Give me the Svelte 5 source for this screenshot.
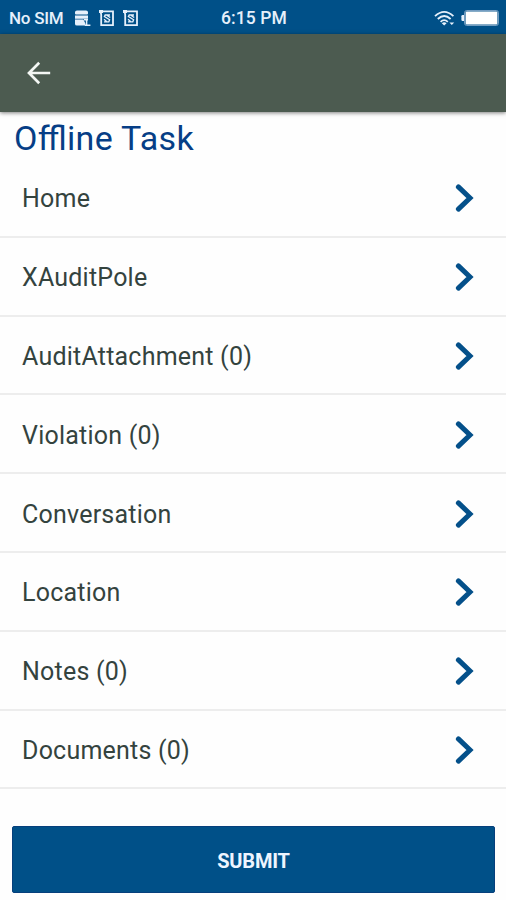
<script lang="ts">
	type Task = {
		label: string;
		count?: number;
	};

	const tasks: Task[] = [
		{ label: 'Home' },
		{ label: 'XAuditPole' },
		{ label: 'AuditAttachment', count: 0 },
		{ label: 'Violation', count: 0 },
		{ label: 'Conversation' },
		{ label: 'Location' },
		{ label: 'Notes', count: 0 },
		{ label: 'Documents', count: 0 }
	];
</script>

{#snippet simIcon()}
	<svg class="sim" viewBox="0 0 16 18" width="16" height="18" aria-hidden="true">
		<path d="M1.6 2.4H14V16.2H2.2V5.6Z" fill="none" stroke="currentColor" stroke-width="1.8" />
		<path d="M0 1h4v3H0z" fill="currentColor" />
		<path
			d="M11 6H6.2L5.4 7.6L10.6 10.8L9.8 12.8H5M8.2 6.4L11.2 8.6M5 10.2L7.6 12.4"
			fill="none"
			stroke="currentColor"
			stroke-width="1.3"
		/>
	</svg>
{/snippet}

<div class="screen">
	<div class="status-bar">
		<div class="status-left">
			<span class="carrier">No SIM</span>
			<svg class="storage" viewBox="0 0 17 17" width="17" height="17" aria-hidden="true">
				<path
					d="M1 2.2Q1 .6 3 .6H12Q14 .6 14 2.2V3.6Q14 4.6 13 4.6H2Q1 4.6 1 3.6ZM1 5.4H14V8.8H1ZM1 9.6H9.4L11.4 13.4V15.6H3Q1 15.6 1 14Z"
					fill="currentColor"
				/>
				<path d="M10 9.8H14M12.6 10V14.4M10.8 15.2H16.4" stroke="currentColor" stroke-width="1.5" />
			</svg>
			{@render simIcon()}
			{@render simIcon()}
		</div>
		<span class="clock">6:15 PM</span>
		<div class="status-right">
			<svg viewBox="0 0 22 17" width="22" height="17" aria-hidden="true">
				<g fill="none" stroke="currentColor" stroke-width="1.8">
					<path d="M1 6.2Q10.2-2.4 19.4 6.2" />
					<path d="M3.8 9Q10.2 3 16.6 9" />
					<path d="M6.6 11.8Q10.2 8.4 13.8 11.8" />
				</g>
				<path d="M7.8 13.2Q10.2 11.2 12.6 13.2L10.2 15.6ZM15.4 12.4H20.2L17.8 15Z" fill="currentColor" />
			</svg>
			<svg class="battery" viewBox="0 0 38 16" width="38" height="16" aria-hidden="true">
				<rect x="3.6" y=".6" width="33.8" height="14.8" rx="2" fill="none" stroke="#7fa6c8" />
				<rect x="4.6" y="1.6" width="31.8" height="12.8" rx="1" fill="#fff" />
				<path d="M3 5H1.6Q.4 5 .4 6.2V9.8Q.4 11 1.6 11H3Z" fill="currentColor" />
			</svg>
		</div>
	</div>

	<header class="toolbar">
		<button class="back" aria-label="Back">
			<svg viewBox="0 0 24 24" width="24" height="24" aria-hidden="true">
				<path d="M12.2 1.8L2 12L12.2 22.2M2.4 12H23.2" />
			</svg>
		</button>
	</header>

	<main>
		<h1>Offline Task</h1>
		<ul class="tasks">
			{#each tasks as task}
				<li>
					<span>{task.label}{task.count === undefined ? '' : ` (${task.count})`}</span>
					<svg class="chevron" viewBox="0 0 20 30" width="20" height="30" aria-hidden="true">
						<path d="M3.4 3.9L15 15L3.4 26.1" />
					</svg>
				</li>
			{/each}
		</ul>
	</main>

	<footer>
		<button class="submit">SUBMIT</button>
	</footer>
</div>

<style>
	:global(body) {
		margin: 0;
		background: #fefefe;
	}

	.screen {
		display: flex;
		flex-direction: column;
		width: 506px;
		height: 900px;
		overflow: hidden;
		background: #fefefe;
		font-family: Roboto, sans-serif;
	}

	.status-bar {
		display: grid;
		grid-template-columns: 1fr auto 1fr;
		align-items: center;
		flex: none;
		height: 34px;
		padding: 0 7px 0 9px;
		box-sizing: border-box;
		background: #005088;
		color: #e6f0fb;
		font-size: 17.5px;
		font-weight: 500;
		line-height: 36px;
	}

	.status-left,
	.status-right {
		display: flex;
		align-items: center;
	}

	.carrier {
		width: 55px;
		font-size: 17px;
		letter-spacing: -0.25px;
		white-space: nowrap;
	}

	.clock {
		letter-spacing: 0.1px;
	}

	.storage {
		margin-left: 10px;
	}

	.sim {
		margin-left: 8px;
	}

	.status-right {
		justify-content: flex-end;
	}

	.battery {
		margin-left: 5px;
	}

	.toolbar {
		z-index: 1;
		display: flex;
		align-items: center;
		flex: none;
		height: 78px;
		padding-left: 27px;
		background: #4c5b50;
		box-shadow: 0 1px 4px rgb(0 0 0 / 50%);
	}

	.back {
		display: flex;
		padding: 0;
		border: 0;
		background: none;
	}

	.back path {
		fill: none;
		stroke: #f4f7f4;
		stroke-width: 2.7;
	}

	h1 {
		height: 47px;
		margin: 0;
		padding-left: 14px;
		color: #063e86;
		font-size: 34px;
		font-weight: 400;
		line-height: 52px;
		letter-spacing: 0.3px;
		/* letter-spacing turns ligatures off, keep the ffl one */
		font-feature-settings: 'liga' 1;
	}

	.tasks {
		margin: 0;
		padding: 0;
		list-style: none;
	}

	li {
		display: flex;
		align-items: center;
		justify-content: space-between;
		box-sizing: border-box;
		height: 78.8px;
		padding: 2px 31px 0 22px;
		border-bottom: 2px solid #ededed;
		color: #34433e;
		font-size: 25px;
		letter-spacing: 0.22px;
	}

	li span {
		padding-top: 1px;
	}

	.chevron path {
		fill: none;
		stroke: #04508a;
		stroke-width: 5;
		stroke-linecap: round;
	}

	footer {
		padding: 37px 11px 0 12px;
	}

	.submit {
		display: block;
		width: 100%;
		height: 67px;
		padding: 2px 0 0;
		border: 1px solid #063f7c;
		border-radius: 2px;
		background: #005088;
		color: #eef5ff;
		font: 700 20px Roboto, sans-serif;
		letter-spacing: -0.2px;
	}
</style>
